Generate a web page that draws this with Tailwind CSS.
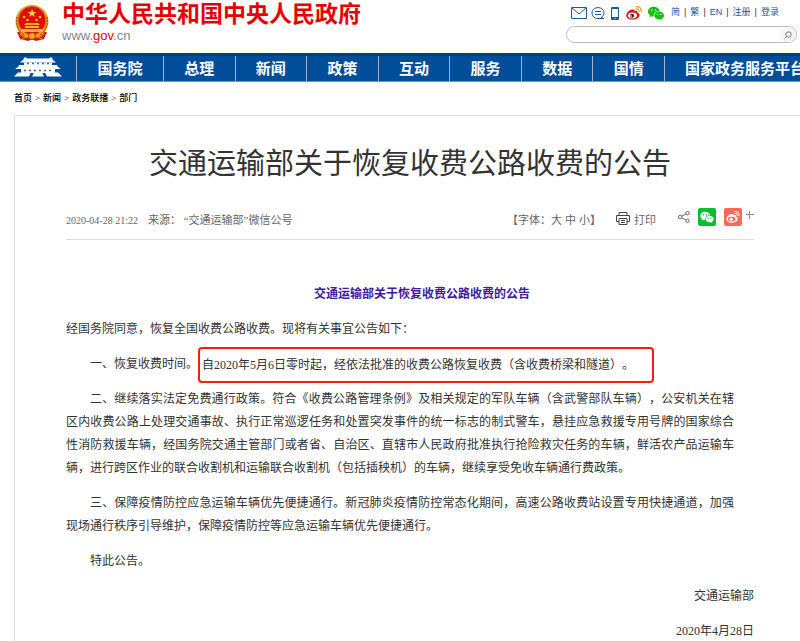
<!DOCTYPE html>
<html lang="zh-CN">
<head>
    <meta charset="UTF-8">
    <meta name="viewport" content="width=device-width, initial-scale=1.0">
    <title>交通运输部关于恢复收费公路收费的公告</title>
    <script src="https://cdn.jsdelivr.net/npm/@tailwindcss/browser@4"></script>
</head>
<body class="bg-white text-[#333] overflow-x-hidden [text-spacing-trim:space-all] font-['Liberation_Serif','Noto_Sans_CJK_SC',serif]">

    <header class="flex justify-between h-[53px] pl-[14px] pr-[3px]">
        <a href="#" class="flex">
            <svg class="w-9 h-10 mt-[3px]" viewBox="0 0 36 40">
                <path d="M3 29 6 36l8 2 4-2 4 2 8-2 3-7z" fill="#d8160c"/>
                <ellipse cx="18" cy="18.500" rx="16.500" ry="16.500" fill="#d9a21b"/>
                <ellipse cx="18" cy="17.500" rx="13.500" ry="14" fill="#e30b0b"/>
                <path d="M3 14c-1 8 1 14 7 18M33 14c1 8-1 14-7 18" fill="none" stroke="#c22a0c" stroke-width="1" stroke-dasharray="2 1"/>
                <path d="m18 6 1.200 3h3l-2.400 1.900.9 3-2.700-1.800-2.700 1.800.9-3L13.800 9h3z" fill="#ffd83a"/>
                <g fill="#ffd83a"><circle cx="10" cy="14" r="1.200"/><circle cx="13.500" cy="17" r="1.200"/><circle cx="22.500" cy="17" r="1.200"/><circle cx="26" cy="14" r="1.200"/></g>
                <path d="M12 20h12l2 2H10zM11 23h14v2H11zM7 26h22v3H7z" fill="#f3b32a"/>
                <circle cx="18" cy="33" r="3.500" fill="#e8b022" stroke="#c3200c"/>
                <path d="M6 31c3 3 6 3 9 2M30 31c-3 3-6 3-9 2M8 36l5-2M28 36l-5-2" fill="none" stroke="#e9a71e" stroke-width="1"/>
            </svg>
            <span class="flex flex-col pl-3 whitespace-nowrap">
                <span class="mb-px text-[23px] leading-7 font-bold text-[#e60000] font-['Liberation_Sans','Noto_Sans_CJK_SC',sans-serif]">中华人民共和国中央人民政府</span>
                <span class="text-[13px] leading-[14px] text-[#888] font-['Liberation_Sans',sans-serif]">www.<span class="text-[#e60000]">gov</span>.cn</span>
            </span>
        </a>

        <div class="w-[231px] shrink-0">
            <nav class="flex items-center h-[26px] pl-[5px] text-[9px] text-[#1a5ba0] whitespace-nowrap font-['Liberation_Sans','Noto_Sans_CJK_SC',sans-serif]">
                <a href="#" aria-label="邮箱"><svg class="w-4 h-3" viewBox="0 0 16 12" fill="none" stroke="currentColor"><path d="M.5.5h15v11H.5zM1 1l7 6 7-6"/></svg></a>
                <a href="#" aria-label="互动" class="ml-1"><svg class="w-[14px] h-3" viewBox="0 0 14 12" fill="none" stroke="currentColor"><path d="M3 10.200C-.5 7.500.5.600 7 .600s8 7.500 3 10l3 .900H7c-1.500 0-3-.400-4-1.300zM4 4.500h6M4 7.500h6"/></svg></a>
                <a href="#" aria-label="客户端" class="ml-[6px]"><svg class="w-2 h-[13px]" viewBox="0 0 8 13"><rect width="8" height="13" rx="1" fill="currentColor"/><path fill="white" d="M1 2h6v8H1zM3.500 11h1v1h-1z"/></svg></a>
                <a href="#" aria-label="微博" class="ml-[7px]"><svg class="w-4 h-[14px]" viewBox="0 0 16 14">
                    <path d="M6 3.500C3 4 .3 7 .3 9.500.3 12 3 13.600 6.500 13.600c4 0 7-2 7-4.400 0-1.500-1-2.200-2-2.400.5-2-.8-2.600-3-1.800.3-1.200-.6-1.800-2.500-1.500z" fill="#d8131c"/>
                    <ellipse cx="6.500" cy="9.500" rx="4.500" ry="3" fill="white"/><circle cx="6" cy="9.700" r="2" fill="#222"/><circle cx="5.300" cy="10" r=".700" fill="white"/>
                    <path d="M10 3c2-.4 3.600 1 3 3M9.500.8C13 0 16 2.500 15.200 6" fill="none" stroke="#f39a1c" stroke-width="1.200"/></svg></a>
                <a href="#" aria-label="微信" class="ml-[5px]"><svg class="w-[18px] h-[14px]" viewBox="0 0 24 20">
                    <path fill="#16c016" d="M9 1C4 1 .5 4 .5 8c0 2.300 1.200 4.200 3 5.500L2.800 16l3-1.500c1 .3 2 .5 3.100.5C8 11 11 7 16.500 7h.7C16.500 3.500 13 1 9 1zM16.500 8c-4 0-7 2.500-7 5.600s3 5.600 7 5.600c.8 0 1.600-.1 2.400-.4l2.400 1.200-.6-2c1.700-1 2.800-2.600 2.800-4.400 0-3.100-3-5.600-7-5.600z"/>
                    <g fill="white"><circle cx="6" cy="6" r="1"/><circle cx="11.500" cy="6" r="1"/><circle cx="14.300" cy="12" r="1"/><circle cx="19" cy="12" r="1"/></g></svg></a>
                <div class="flex gap-1 pl-[6px]">
                    <a href="#">简</a><span class="text-[#333]">|</span>
                    <a href="#">繁</a><span class="text-[#333]">|</span>
                    <a href="#">EN</a><span class="text-[#333]">|</span>
                    <a href="#">注册</a><span class="text-[#333]">|</span>
                    <a href="#">登录</a>
                </div>
            </nav>
            <form class="flex items-center h-[17px] border border-[#bbb] rounded-full overflow-hidden">
                <input type="text" aria-label="搜索" class="flex-1 min-w-0 px-2 text-[10px] outline-none">
                <button type="button" aria-label="搜索" class="flex items-center justify-center w-4 h-4 rounded-full bg-[#f4f4f4] text-[#777]">
                    <svg class="w-2 h-2" viewBox="0 0 8 8" fill="none" stroke="currentColor"><circle cx="4.500" cy="3.500" r="2.700"/><path d="M2.500 5.500.5 7.500"/></svg>
                </button>
            </form>
        </div>
    </header>

    <nav class="flex h-[29px] bg-[#004d99] border-t-3 border-t-[#063d75] border-b border-b-[#5b9bd0] text-white text-[15px] leading-6 font-bold text-center whitespace-nowrap overflow-hidden font-['Noto_Sans_CJK_SC',sans-serif]">
        <a href="#" aria-label="首页" class="w-[76px] shrink-0 pl-[14px]">
            <svg class="w-12 h-5 mt-px" viewBox="0 0 48 20">
                <g fill="white">
                    <path d="M10 .5h2l1 1h22l1-1h2l.5 2 3.500 3H6l3.500-3z"/>
                    <path d="M10 5.500h28V9H10z"/>
                    <path d="M5 8h38l.5 1.500L47 12H1l3.500-2.500z"/>
                    <path d="M7 12h34v4H7z"/>
                    <path d="M4 15.500h13L15 19.500H0zM31 15.500h13l4 4H33zM20 15.500h8l2 4H18z"/>
                </g>
                <path d="M13 6.500h22M10 13.500h28" stroke="#2f6fae" stroke-width="1.500" stroke-dasharray="2 3"/>
            </svg>
        </a>
        <a href="#" class="w-[87px] shrink-0 border-l border-[#9db4cc]">国务院</a>
        <div class="flex w-[501px] shrink-0">
            <a href="#" class="flex-1 border-l border-[#9db4cc]">总理</a>
            <a href="#" class="flex-1 border-l border-[#9db4cc]">新闻</a>
            <a href="#" class="flex-1 border-l border-[#9db4cc]">政策</a>
            <a href="#" class="flex-1 border-l border-[#9db4cc]">互动</a>
            <a href="#" class="flex-1 border-l border-[#9db4cc]">服务</a>
            <a href="#" class="flex-1 border-l border-[#9db4cc]">数据</a>
            <a href="#" class="flex-1 border-l border-[#9db4cc]">国情</a>
        </div>
        <a href="#" class="flex-1 border-l border-[#9db4cc] pl-5 text-left">国家政务服务平台</a>
    </nav>

    <div class="flex items-center gap-[3px] h-[33px] pl-[14px] text-[9px] font-medium text-black">
        <a href="#">首页</a><span>&gt;</span>
        <a href="#">新闻</a><span>&gt;</span>
        <a href="#">政务联播</a><span>&gt;</span>
        <a href="#">部门</a>
    </div>

    <main class="ml-[14px] border-t border-l border-[#ddd] pl-[51px] pr-[46px] pb-2">
        <h1 class="pt-7 text-[29px] leading-10 text-center font-['Liberation_Sans','Noto_Sans_CJK_SC',sans-serif]">交通运输部关于恢复收费公路收费的公告</h1>

        <div class="flex items-center justify-between h-[38px] mt-[18px] border-b border-[#ddd] text-[11px] text-[#666] whitespace-nowrap">
            <div class="flex items-center gap-[10px]">
                <time class="text-[10px]">2020-04-28 21:22</time>
                <span>来源： “交通运输部”微信公号</span>
            </div>
            <div class="flex items-center">
                <div class="flex mr-[15px]">
                    <span>【字体：</span>
                    <button type="button">大</button>
                    <button type="button" class="mx-[3px]">中</button>
                    <button type="button">小</button>
                    <span>】</span>
                </div>
                <button type="button" class="flex items-center gap-1 mr-[22px]">
                    <svg class="w-[14px] h-[13px] -mt-1" viewBox="0 0 14 13" fill="none" stroke="#444"><path d="M3 3.500v-3h8v3M3 9.500H.5v-6h13v6H11M3 6.500h8v6H3zM5 8.500h4M5 10.500h4"/></svg>
                    <span>打印</span>
                </button>
                <a href="#" aria-label="分享" class="mr-2 -mt-2"><svg class="w-3 h-3" viewBox="0 0 12 12" fill="none" stroke="#666"><circle cx="2.200" cy="6" r="1.700"/><circle cx="9.500" cy="2.200" r="1.700"/><circle cx="9.500" cy="9.800" r="1.700"/><path d="m4 5 4-2M4 7l4 2"/></svg></a>
                <a href="#" aria-label="微信" class="flex items-center justify-center w-[18px] h-[18px] mr-2 -mt-2 rounded-xs bg-[#04c02a]">
                    <svg class="w-[14px] h-3" viewBox="0 0 24 20">
                        <path fill="white" d="M9 1C4 1 .5 4 .5 8c0 2.300 1.200 4.200 3 5.500L2.800 16l3-1.500c1 .3 2 .5 3.100.5C8 11 11 7 16.500 7h.7C16.500 3.500 13 1 9 1zM16.500 8c-4 0-7 2.500-7 5.600s3 5.600 7 5.600c.8 0 1.600-.1 2.400-.4l2.400 1.200-.6-2c1.700-1 2.800-2.600 2.800-4.400 0-3.100-3-5.600-7-5.600z"/>
                        <g fill="#04c02a"><circle cx="6" cy="6" r="1.300"/><circle cx="11.500" cy="6" r="1.300"/><circle cx="14.300" cy="12" r="1.100"/><circle cx="19" cy="12" r="1.100"/></g>
                    </svg>
                </a>
                <a href="#" aria-label="微博" class="flex items-center justify-center w-[18px] h-[18px] -mt-2 rounded-xs bg-[#ff6757]">
                    <svg class="w-[14px] h-3" viewBox="0 0 16 14">
                        <path d="M6 3.500C3 4 .3 7 .3 9.500.3 12 3 13.600 6.500 13.600c4 0 7-2 7-4.400 0-1.500-1-2.200-2-2.400.5-2-.8-2.600-3-1.800.3-1.200-.6-1.800-2.500-1.500z" fill="white"/>
                        <ellipse cx="6.500" cy="9.500" rx="4.500" ry="2.800" fill="#ff6757"/><circle cx="6" cy="9.700" r="1.900" fill="white"/>
                        <path d="M10 3c2-.4 3.600 1 3 3M9.500.8C13 0 16 2.500 15.200 6" fill="none" stroke="white" stroke-width="1.200"/>
                    </svg>
                </a>
                <button type="button" aria-label="更多" class="-mt-3 ml-1"><svg class="w-2 h-2" viewBox="0 0 8 8" stroke="#888"><path d="M0 3.500h8M3.500 0v8"/></svg></button>
            </div>
        </div>

        <article class="flex flex-col gap-3 pt-[43px] text-[12px] leading-[23px] text-[#333]">
            <h2 class="indent-6 text-center font-bold text-[#3d1a9c]">交通运输部关于恢复收费公路收费的公告</h2>
            <p>经国务院同意，恢复全国收费公路收费。现将有关事宜公告如下：</p>
            <p class="pl-6 whitespace-nowrap">一、恢复收费时间。<mark class="inline-flex items-center h-9 -my-2 pl-[2px] pr-[18px] align-middle border-2 border-[#fb1d0e] rounded bg-transparent text-inherit">自2020年5月6日零时起，经依法批准的收费公路恢复收费（含收费桥梁和隧道）。</mark></p>
            <p class="indent-6 pr-5 text-justify">二、继续落实法定免费通行政策。符合《收费公路管理条例》及相关规定的军队车辆（含武警部队车辆），公安机关在辖区内收费公路上处理交通事故、执行正常巡逻任务和处置突发事件的统一标志的制式警车，悬挂应急救援专用号牌的国家综合性消防救援车辆，经国务院交通主管部门或者省、自治区、直辖市人民政府批准执行抢险救灾任务的车辆，鲜活农产品运输车辆，进行跨区作业的联合收割机和运输联合收割机（包括插秧机）的车辆，继续享受免收车辆通行费政策。</p>
            <p class="indent-6 pr-5 text-justify">三、保障疫情防控应急运输车辆优先便捷通行。新冠肺炎疫情防控常态化期间，高速公路收费站设置专用快捷通道，加强现场通行秩序引导维护，保障疫情防控等应急运输车辆优先便捷通行。</p>
            <p class="indent-6">特此公告。</p>
            <p class="text-right">交通运输部</p>
            <p class="text-right">2020年4月28日</p>
        </article>
    </main>
</body>
</html>
